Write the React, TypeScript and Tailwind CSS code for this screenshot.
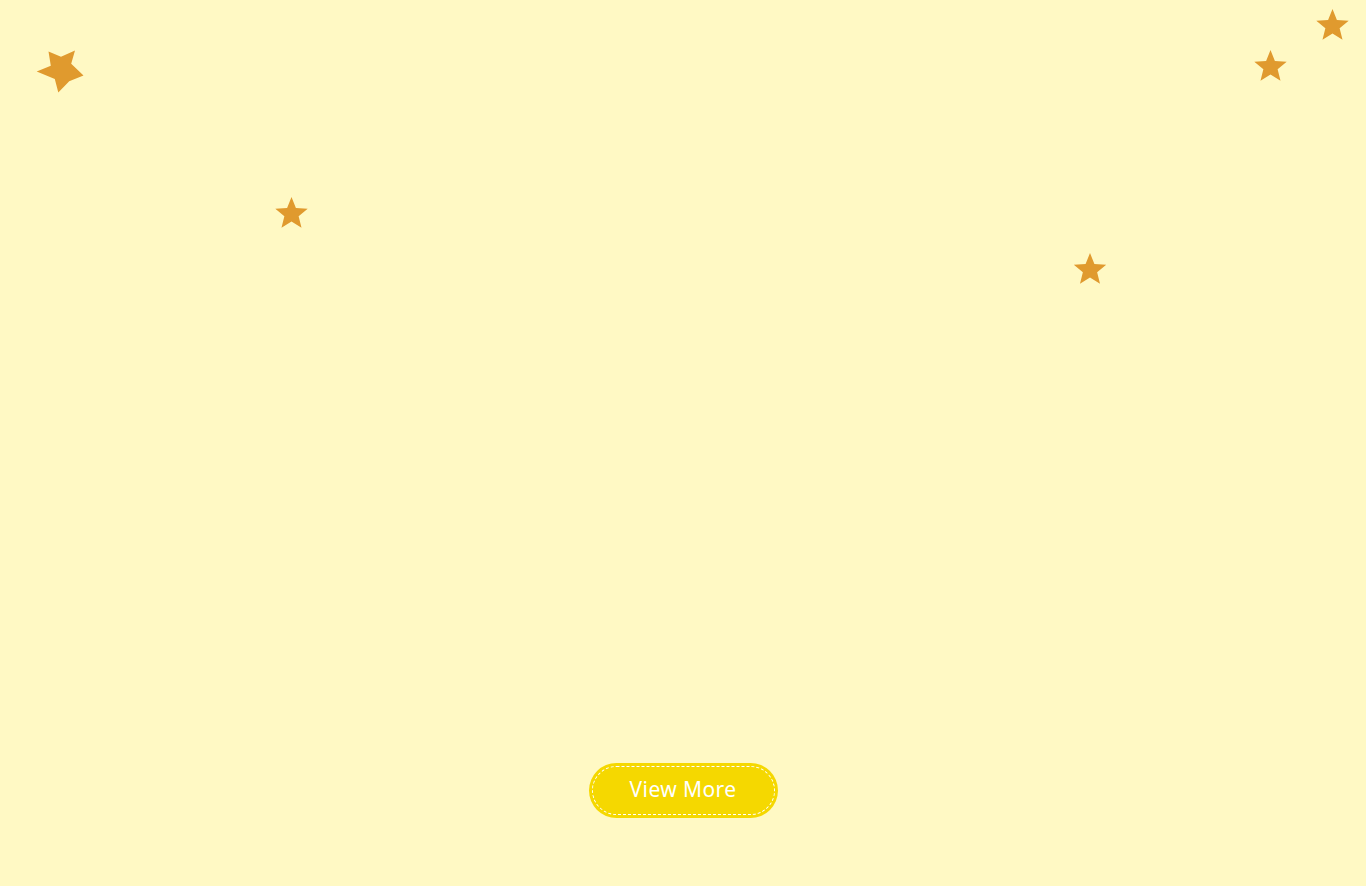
const STAR_POINTS =
  "50,0 62.93,32.2 97.55,34.55 70.92,56.8 79.39,90.45 50,72 20.61,90.45 29.08,56.8 2.45,34.55 37.07,32.2";

function Star({ className }: { className: string }) {
  return (
    <svg viewBox="2 0 96 91" className={className} aria-hidden="true">
      <polygon points={STAR_POINTS} fill="#e09a2e" strokeLinejoin="round" />
    </svg>
  );
}

export default function App() {
  return (
    <section className="relative flex h-[886px] w-full flex-col items-center justify-end overflow-hidden bg-[#fff9c4] pb-[68px]">
      {/* decorative stars */}
      <svg
        viewBox="0 0 52 50"
        className="absolute left-[35px] top-[46px] h-[50px] w-[52px]"
        aria-hidden="true"
      >
        <polygon
          points="1.7,25.5 15.8,19.8 13.5,5.5 26,10.8 40,4.5 36.2,17.8 48.5,29.5 34.2,35.3 23.3,46.5 19.8,33"
          fill="#e09a2e"
          strokeLinejoin="round"
        />
      </svg>
      <Star className="absolute left-[275px] top-[197px] h-[31px] w-[33px]" />
      <Star className="absolute left-[1073px] top-[253px] h-[31px] w-[34px]" />
      <Star className="absolute left-[1253px] top-[50px] h-[31px] w-[35px]" />
      <Star className="absolute left-[1315px] top-[9px] h-[31px] w-[35px]" />

      <button
        type="button"
        className="h-[55px] w-[189px] rounded-full bg-[#f5d800] p-[3px]"
      >
        <span className="flex h-full w-full items-center justify-center rounded-full border border-dashed border-white pb-[1px] text-[21px] font-normal tracking-[0.4px] text-white [font-family:'Noto_Sans',sans-serif]">
          View More
        </span>
      </button>
    </section>
  );
}
